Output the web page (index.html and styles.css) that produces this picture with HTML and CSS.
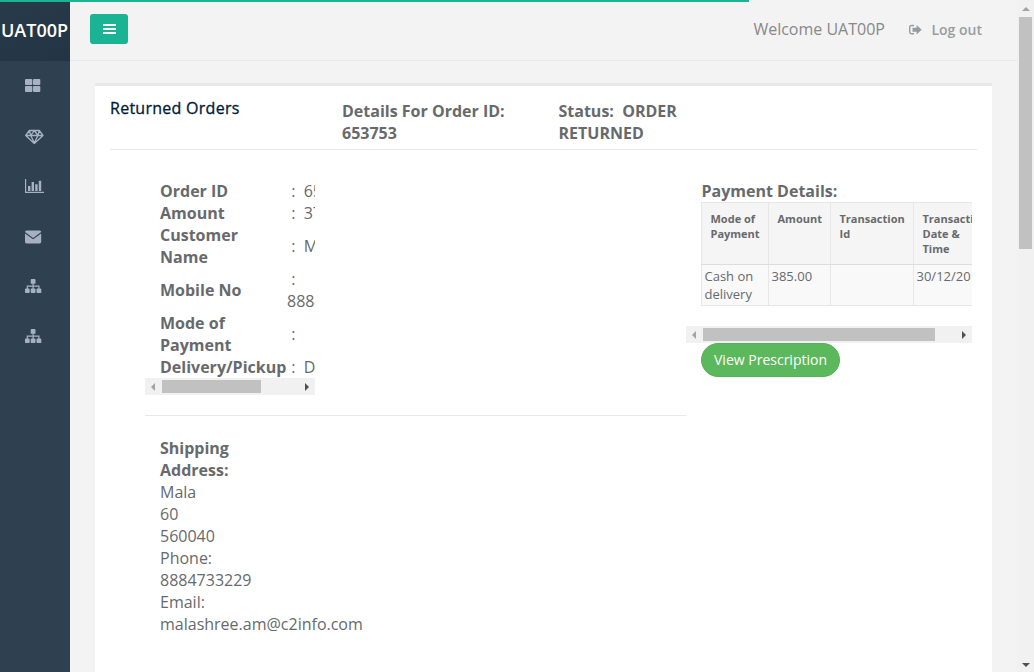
FILE: index.html
```html
<!DOCTYPE html>
<html lang="en">
<head>
<meta charset="utf-8">
<title>Returned Orders</title>
<link rel="stylesheet" href="styles.css">
</head>
<body>
<div class="progress"></div>
<nav class="sidebar">
  <div class="brand">UAT00P</div>
  <ul class="menu">
    <li><svg width="20" height="16" viewBox="0 0 20 16"><rect x="0" y="1" width="7.3" height="6" rx="1"/><rect x="8" y="1" width="7.3" height="6" rx="1"/><rect x="0" y="8" width="7.3" height="6" rx="1"/><rect x="8" y="8" width="7.3" height="6" rx="1"/></svg></li>
    <li><svg width="20" height="16" viewBox="0 0 20 16"><path class="line" d="M4.300 2.500h10L18 7.500 9.300 15.400 .7 7.500zM.7 7.500H18M4.300 2.500l1.500 5L9.300 15l3.600-7.500 1.400-5M5.800 7.500l3.500-5 3.600 5"/></svg></li>
    <li><svg width="20" height="16" viewBox="0 0 20 16"><path d="M0 1h1.200v12.800H19V15H0zM3 8h2.400v5H3zM6.600 4H9v9H6.600zM10.200 6.200h2.400V13h-2.400zM13.800 2.800h2.400V13h-2.400z"/></svg></li>
    <li><svg width="20" height="16" viewBox="0 0 20 16"><path d="M1.500 2.500h13.200Q16.200 2.500 16.200 4L8.100 9.900 0 4Q0 2.500 1.500 2.500zM0 5.500l8.100 5.700L16.200 5.500v8.300q0 1.700-1.500 1.700H1.500Q0 15.500 0 13.800z"/></svg></li>
    <li><svg width="20" height="16" viewBox="0 0 20 16"><path d="M6.600 1h3q.9 0 .9.900v3q0 .9-.9.900h-.9V7.500h5.800V10.600h.9q.9 0 .9.900v2.900q0 .6-.9.600h-3q-.9 0-.9-.9v-2.600q0-.9.900-.9h.9V8.700H8.700v1.900h.9q.9 0 .9.900v2.600q0 .9-.9.900h-3q-.9 0-.9-.9v-2.600q0-.9.900-.9h.9V8.700H2.900v1.900h.9q.9 0 .9.900v2.600q0 .9-.9.900h-3Q0 15 0 14.100v-2.600q0-.9.800-.9h.900V7.500h5.800V5.800h-.9q-.9 0-.9-.9v-3Q5.700 1 6.600 1z"/></svg></li>
    <li><svg width="20" height="16" viewBox="0 0 20 16"><path d="M6.600 1h3q.9 0 .9.900v3q0 .9-.9.900h-.9V7.500h5.800V10.600h.9q.9 0 .9.900v2.900q0 .6-.9.600h-3q-.9 0-.9-.9v-2.600q0-.9.900-.9h.9V8.700H8.700v1.900h.9q.9 0 .9.900v2.600q0 .9-.9.900h-3q-.9 0-.9-.9v-2.600q0-.9.900-.9h.9V8.700H2.900v1.900h.9q.9 0 .9.900v2.600q0 .9-.9.900h-3Q0 15 0 14.100v-2.600q0-.9.800-.9h.900V7.500h5.800V5.800h-.9q-.9 0-.9-.9v-3Q5.700 1 6.600 1z"/></svg></li>
  </ul>
</nav>
<main class="page">
  <header class="topbar">
    <button class="toggle" aria-label="Menu"><svg width="13" height="10" viewBox="0 0 13 10"><path d="M0 0h13v2H0zM0 4h13v2H0zM0 8h13v2H0z"/></svg></button>
    <span class="welcome">Welcome UAT00P</span>
    <a class="logout"><svg width="13" height="12" viewBox="0 0 13 12"><path class="door" d="M5 1.500H2.500Q.7 1.500.7 3.200v4.900q0 1.700 1.800 1.700H5"/><path d="M3.500 3.700H7.600V.9l5.100 4.800-5.100 4.800V7.700H3.500z"/></svg>Log out</a>
  </header>
  <section class="card">
    <div class="card-head">
      <h5 class="title">Returned Orders</h5>
      <b class="order-head">Details For Order ID: 653753</b>
      <b class="status-head">Status:&nbsp; ORDER RETURNED</b>
    </div>
    <div class="card-body">
      <div class="left">
        <div class="order">
          <dl class="facts">
            <dt>Order ID</dt><dd>&nbsp;:&nbsp; 653753</dd>
            <dt>Amount</dt><dd>&nbsp;:&nbsp; 379.50</dd>
            <dt>Customer<br>Name</dt><dd>&nbsp;:&nbsp; Mala</dd>
            <dt>Mobile No</dt><dd>&nbsp;:<br>8884733229</dd>
            <dt>Mode of<br>Payment</dt><dd>&nbsp;:</dd>
            <dt>Delivery/Pickup</dt><dd>&nbsp;:&nbsp; Delivery</dd>
          </dl>
          <div class="hbar"><svg class="arrow dim" width="4" height="8" viewBox="0 0 4 8"><path d="M4 0v8L0 4z"/></svg><i class="thumb order-thumb"></i><svg class="arrow" width="4" height="8" viewBox="0 0 4 8"><path d="M0 0v8l4-4z"/></svg></div>
        </div>
        <address class="shipping"><b>Shipping<br>Address:</b><br>Mala<br>60<br>560040<br>Phone:<br>8884733229<br>Email:<br>malashree.am@c2info.com</address>
      </div>
      <div class="payment">
        <div class="pay-scroll">
          <b>Payment Details:</b>
          <table class="pay-table">
            <colgroup><col class="c-mode"><col class="c-amount"><col class="c-id"><col class="c-date"></colgroup>
            <thead><tr><th>Mode of Payment</th><th>Amount</th><th>Transaction Id</th><th>Transaction<br>Date &amp;<br>Time</th></tr></thead>
            <tbody><tr><td>Cash on delivery</td><td>385.00</td><td></td><td>30/12/2016</td></tr></tbody>
          </table>
        </div>
        <div class="hbar"><svg class="arrow dim" width="4" height="8" viewBox="0 0 4 8"><path d="M4 0v8L0 4z"/></svg><i class="thumb pay-thumb"></i><svg class="arrow" width="4" height="8" viewBox="0 0 4 8"><path d="M0 0v8l4-4z"/></svg></div>
        <button class="view">View Prescription</button>
      </div>
    </div>
  </section>
</main>
<div class="vbar"><svg class="dim" width="8" height="4" viewBox="0 0 8 4"><path d="M0 4h8L4 0z"/></svg><i class="vthumb"></i><svg width="8" height="4" viewBox="0 0 8 4"><path d="M0 0h8L4 4z"/></svg></div>
</body>
</html>
```
FILE: styles.css
```css
* { box-sizing: border-box; }
body {
  margin: 0;
  width: 1034px;
  height: 672px;
  overflow: hidden;
  display: flex;
  background: #f3f3f4;
  color: #676a6c;
  font: 16px/22px "Open Sans", sans-serif;
}
svg { display: block; fill: currentColor; }
b { font-weight: 700; }
button { border: 0; font-family: inherit; padding: 0; }
.progress { position: absolute; left: 0; top: 0; width: 748.500px; height: 2px; background: #1ab394; }

.sidebar { width: 70px; flex: none; background: #2f4050; color: #a7b1c2; }
.brand {
  height: 61px;
  padding-left: 1px;
  background: linear-gradient(160deg, #283b49, #233544);
  color: #fff;
  font-size: 18px;
  font-weight: 600;
  line-height: 61px;
  white-space: nowrap;
}
.menu { margin: 0; padding: 0; list-style: none; }
.menu li { height: 50px; padding: 17px 0 0 25px; }
.line { fill: none; stroke: currentColor; stroke-width: 1.3; stroke-linejoin: round; }

.page { flex: 1; min-width: 0; display: flex; flex-direction: column; }
.topbar {
  flex: none;
  height: 61px;
  padding: 14px 35px 0 20px;
  display: flex;
  align-items: flex-start;
  border-bottom: 1px solid #e7eaec;
}
.toggle {
  width: 38px;
  height: 30px;
  border-radius: 3px;
  display: grid;
  place-items: center;
  background: #1ab394;
  color: #fff;
}
.welcome { margin: 4px 23px 0 auto; color: #888; }
.logout { display: flex; align-items: center; gap: 10px; margin-top: 5px; color: #999c9e; font-size: 14px; font-weight: 600; }
.logout svg { margin-left: 1px; margin-right: -1px; }
.welcome { margin-right: 23.500px; }
.door { fill: none; stroke: currentColor; stroke-width: 1.4; }

.card { flex: 1; margin: 22px 25px 0; padding: 0 15px; background: #fff; border-top: 3px solid #e7eaec; }
.card-head { display: flex; height: 64px; padding-top: 14px; border-bottom: 1px solid #e7eaec; }
.title { margin: -3px 0 0; width: 232px; color: #001a35; font-size: 16px; font-weight: 400; letter-spacing: .27px; -webkit-text-stroke: .3px #001a35; }
.order-head { width: 216.500px; padding-right: 40px; }
.status-head { width: 150px; }
.card-body { display: flex; padding: 30px 5px 0 35px; }
.left { width: 541px; }
.order { height: 236px; border-bottom: 1px solid #e7eaec; }
.facts {
  width: 170px;
  margin: 0;
  padding-left: 15px;
  display: grid;
  grid-template-columns: 127px 100px;
  align-items: center;
  overflow: hidden;
}
.facts dt { font-weight: 700; }
.facts dd { margin: 0; white-space: nowrap; }
.hbar { display: flex; align-items: center; justify-content: space-between; height: 17px; padding: 0 6px; background: #f1f1f1; color: #505050; }
.order .hbar { width: 170px; }
.arrow { flex: none; }
.dim { color: #a3a3a3; }
.thumb { height: 13px; background: #c1c1c1; }
.order-thumb { width: 99px; margin: 0 auto 0 7px; }
.pay-thumb { width: 232px; margin: 0 auto 0 7px; }
.shipping { margin: 21px 0 0 15px; font-style: normal; }

.payment { width: 286px; }
.pay-scroll { height: 146px; padding-left: 15px; overflow: hidden; }
.pay-scroll > b { margin-left: .5px; }
.pay-table { width: 300px; table-layout: fixed; border-collapse: collapse; background: #f9f9f9; }
.c-mode { width: 67px; }
.c-amount { width: 62px; }
.c-id { width: 83px; }
.c-date { width: 88px; }
.pay-table th, .pay-table td { border: 1px solid #e7e7e7; text-align: left; vertical-align: top; }
.pay-table th { height: 62px; padding: 8px 0 0 8.500px; background: #f5f5f6; border-bottom-color: #ddd; font-size: 11px; line-height: 15px; }
.pay-table td { height: 41px; padding: 2px 0 0 2.500px; font-size: 13px; line-height: 18px; }
.view {
  display: block;
  width: 139px;
  height: 34px;
  margin-left: 15px;
  padding-bottom: 2px;
  border: 1px solid #54b454;
  border-radius: 17px;
  background: #5cb85c;
  color: #fff;
  font-size: 14px;
}
.vbar { width: 17px; flex: none; display: flex; flex-direction: column; align-items: center; padding: 7px 0 5px; background: #f1f1f1; color: #505050; }
.vthumb { width: 13px; height: 232px; margin: 6px 0 auto; background: #c1c1c1; }
```
